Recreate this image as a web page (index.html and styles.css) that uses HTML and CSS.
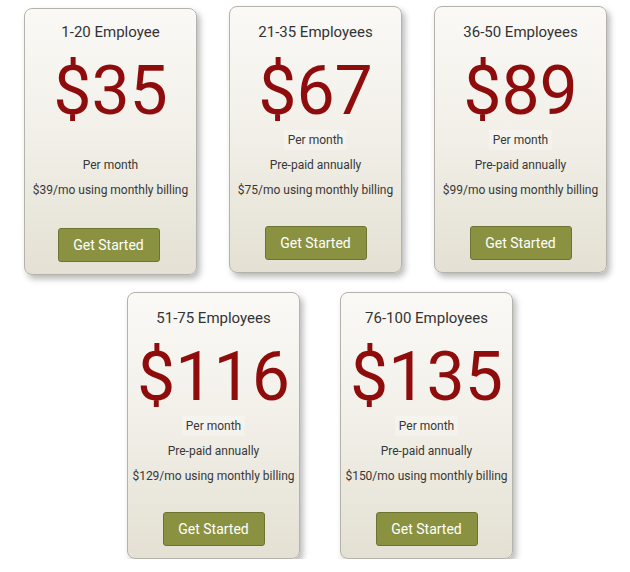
FILE: index.html
```html
<!DOCTYPE html>
<html>
<head>
<meta charset="utf-8">
<link rel="stylesheet" href="styles.css">
</head>
<body>
<div class="pricing">
  <div class="row row-top">
    <div class="card card-first">
      <div class="title">1-20 Employee</div>
      <div class="price">$35</div>
      <div class="lines">
        <div class="line"></div>
        <div class="line">Per month</div>
        <div class="line">$39/mo using monthly billing</div>
      </div>
      <a class="btn">Get Started</a>
    </div>
    <div class="card">
      <div class="title">21-35 Employees</div>
      <div class="price">$67</div>
      <div class="lines">
        <div class="line"><span class="hl">Per month</span></div>
        <div class="line">Pre-paid annually</div>
        <div class="line">$75/mo using monthly billing</div>
      </div>
      <a class="btn">Get Started</a>
    </div>
    <div class="card">
      <div class="title">36-50 Employees</div>
      <div class="price">$89</div>
      <div class="lines">
        <div class="line"><span class="hl">Per month</span></div>
        <div class="line">Pre-paid annually</div>
        <div class="line">$99/mo using monthly billing</div>
      </div>
      <a class="btn">Get Started</a>
    </div>
  </div>
  <div class="row row-bottom">
    <div class="card">
      <div class="title">51-75 Employees</div>
      <div class="price">$116</div>
      <div class="lines">
        <div class="line"><span class="hl">Per month</span></div>
        <div class="line">Pre-paid annually</div>
        <div class="line">$129/mo using monthly billing</div>
      </div>
      <a class="btn">Get Started</a>
    </div>
    <div class="card">
      <div class="title">76-100 Employees</div>
      <div class="price">$135</div>
      <div class="lines">
        <div class="line"><span class="hl">Per month</span></div>
        <div class="line">Pre-paid annually</div>
        <div class="line">$150/mo using monthly billing</div>
      </div>
      <a class="btn">Get Started</a>
    </div>
  </div>
</div>
</body>
</html>
```

FILE: styles.css
```css
* { box-sizing: border-box; }
html, body { margin: 0; padding: 0; background: #ffffff; }
body {
  font-family: Roboto, "Liberation Sans", Arial, sans-serif;
  color: #333333;
}
.pricing {
  padding-top: 6px;
  display: flex;
  flex-direction: column;
  gap: 17px;
}
.row {
  display: flex;
  align-items: flex-start;
}
.row-top {
  padding-left: 24px;
  gap: 32px;
}
.row-bottom {
  padding-left: 127px;
  gap: 40px;
}
.card {
  width: 173px;
  height: 267px;
  border: 1px solid #b4b2aa;
  border-radius: 8px;
  background: linear-gradient(to bottom, #faf9f6 0%, #f2f0e9 45%, #e4e0d3 100%);
  box-shadow: 3px 4px 6px rgba(0, 0, 0, 0.28);
  display: flex;
  flex-direction: column;
  align-items: center;
  padding: 15px 0 12px;
  text-align: center;
}
.card-first { margin-top: 2px; }
.card-first .title { margin-top: -2px; }
.card-first .btn { margin-left: -4px; }
.title {
  font-size: 15px;
  line-height: 20px;
  color: #333333;
}
.price {
  margin-top: 15px;
  font-size: 68px;
  line-height: 68px;
  color: #8e0c0c;
}
.lines {
  margin-top: 3px;
  display: flex;
  flex-direction: column;
}
.line {
  font-size: 12px;
  line-height: 25px;
  height: 25px;
  color: #383838;
  white-space: nowrap;
}
.hl {
  background: rgba(255, 255, 255, 0.25);
  padding: 3px 4px;
}
.btn {
  margin-top: auto;
  width: 102px;
  height: 34px;
  line-height: 32px;
  background: #8a9241;
  border: 1px solid #6d7431;
  border-radius: 3px;
  color: #ffffff;
  font-size: 14px;
  cursor: pointer;
}
```
